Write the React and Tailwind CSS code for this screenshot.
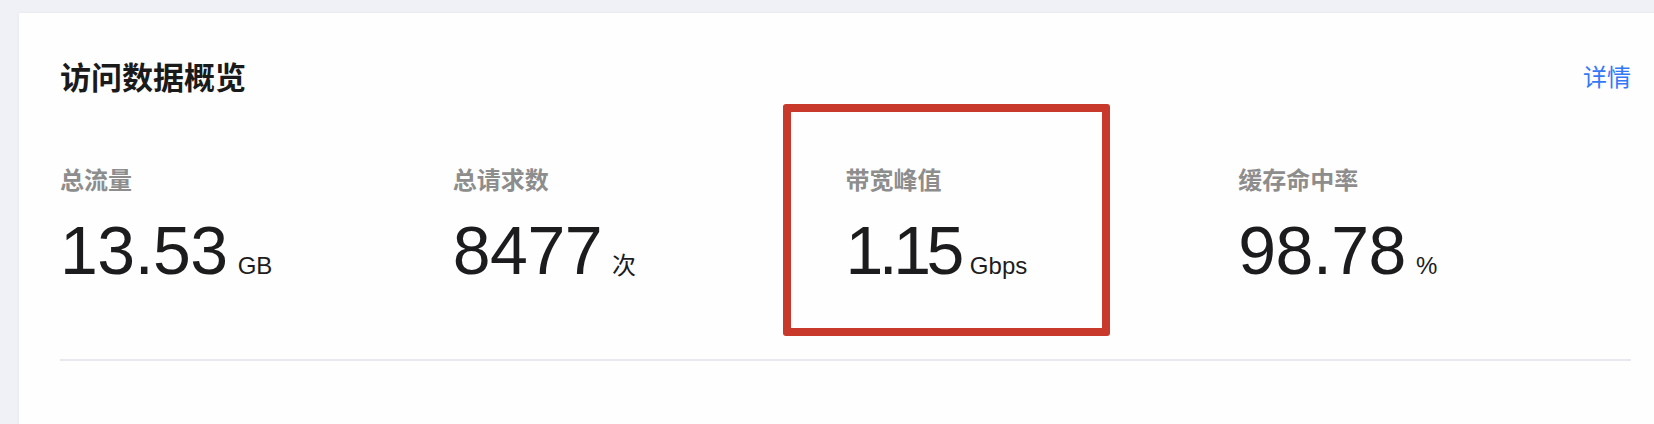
const stats = [
    { label: '总流量', value: '13.53', unit: 'GB', tracking: 'tracking-[-0.5px]' },
    { label: '总请求数', value: '8477', unit: '次', tracking: 'tracking-[-0.5px]' },
    { label: '带宽峰值', value: '1.15', unit: 'Gbps', tracking: 'tracking-[-4.5px]', marked: true },
    { label: '缓存命中率', value: '98.78', unit: '%', tracking: 'tracking-[-0.5px]' },
];

const cjk = "font-['Noto_Sans_CJK_SC',sans-serif]";
const latin = "font-['Liberation_Sans','Noto_Sans_CJK_SC',sans-serif]";

function Stat({ label, value, unit, tracking, marked }) {
    return (
        <div className="relative">
            {/* Annotation frame */}
            {marked && (
                <div className="absolute left-[-63px] top-[-63px] w-[327px] h-[232px] border-[8px] border-[#c9392b] rounded-[3px]"></div>
            )}
            <div className={`${cjk} text-[24px] leading-none font-bold text-[#8d8d8d]`}>{label}</div>
            <div className="mt-[25px] flex items-baseline">
                <span className={`${latin} ${tracking} text-[68px] leading-none text-[#1c1c1e]`}>{value}</span>
                <span className={`${latin} ml-[10px] text-[24px] leading-none text-[#1c1c1e]`}>{unit}</span>
            </div>
        </div>
    );
}

export default function App() {
    return (
        <div className="w-[1654px] h-[424px] overflow-hidden bg-[#f0f1f6] pt-[13px] pl-[19px]">
            <div className="w-[1653px] h-[420px] bg-[#fefefe] shadow-[0_0_3px_rgba(0,0,0,0.06)] px-[41px] pt-[47px]">
                {/* Header */}
                <div className="flex items-center justify-between">
                    <h2 className={`${cjk} text-[31px] leading-none font-bold text-[#1a1a1a]`}>访问数据概览</h2>
                    <a className={`${cjk} text-[24px] leading-none text-[#3478f6]`}>详情</a>
                </div>

                {/* Stats */}
                <div className="mt-[76px] grid grid-cols-4">
                    {stats.map((s) => (
                        <Stat key={s.label} {...s} />
                    ))}
                </div>

                <div className="mt-[75px] h-[2px] bg-[#e8e8ef]"></div>
            </div>
        </div>
    );
}
